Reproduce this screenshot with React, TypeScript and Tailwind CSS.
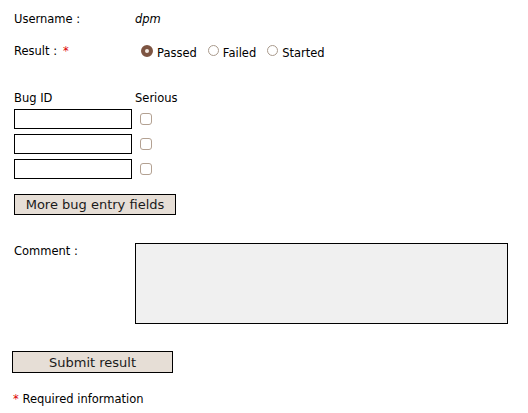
import React from 'react';

function Radio({ checked, label }: { checked?: boolean; label: string }) {
  return (
    <label className="flex items-start gap-[4px] mr-[11px]">
      {checked ? (
        <span className="mt-[1px] w-[12px] h-[12px] rounded-full border-[4px] border-[#7d5442] bg-[#f4ebe4]" />
      ) : (
        <span className="mt-[1px] w-[11px] h-[11px] rounded-full border border-[#a99a8c] bg-white" />
      )}
      <span className="mt-[2px]">{label}</span>
    </label>
  );
}

function BugRow() {
  return (
    <div className="flex items-center">
      <div className="w-[118px] h-[20px] border border-black bg-white" />
      <span className="ml-[8px] w-[12px] h-[12px] rounded-[3px] border border-[#b3a192] bg-white" />
    </div>
  );
}

export default function App() {
  return (
    <div className="w-[528px] h-[413px] bg-white text-black font-['DejaVu_Sans',sans-serif] text-[11.5px] leading-[14px] pl-[14px] pt-[12px]">
      <div className="flex">
        <div className="w-[121px]">Username :</div>
        <div className="italic">dpm</div>
      </div>

      <div className="flex mt-[18px] h-[17px]">
        <div className="w-[127px]">
          Result :<span className="ml-[6px] text-[#d00]">*</span>
        </div>
        <div className="flex">
          <Radio checked label="Passed" />
          <Radio label="Failed" />
          <Radio label="Started" />
        </div>
      </div>

      <div className="flex mt-[30px]">
        <div className="w-[121px]">Bug ID</div>
        <div>Serious</div>
      </div>

      <div className="flex flex-col gap-[5px] mt-[4px]">
        <BugRow />
        <BugRow />
        <BugRow />
      </div>

      <button className="mt-[15px] w-[162px] h-[21px] border border-black bg-[#e6ded6] text-[13px] leading-[15px] text-[#1a1a1a]">
        More bug entry fields
      </button>

      <div className="flex mt-[28px]">
        <div className="w-[121px] pt-[1px]">Comment :</div>
        <div className="w-[373px] h-[81px] border border-black bg-[#f0f0f0]" />
      </div>

      <button className="mt-[27px] -ml-[2px] w-[161px] h-[22px] border border-black bg-[#e6ded6] text-[13px] leading-[15px] text-[#1a1a1a]">
        Submit result
      </button>

      <div className="mt-[19px] -ml-[1px]">
        <span className="text-[#d00]">*</span> Required information
      </div>
    </div>
  );
}
